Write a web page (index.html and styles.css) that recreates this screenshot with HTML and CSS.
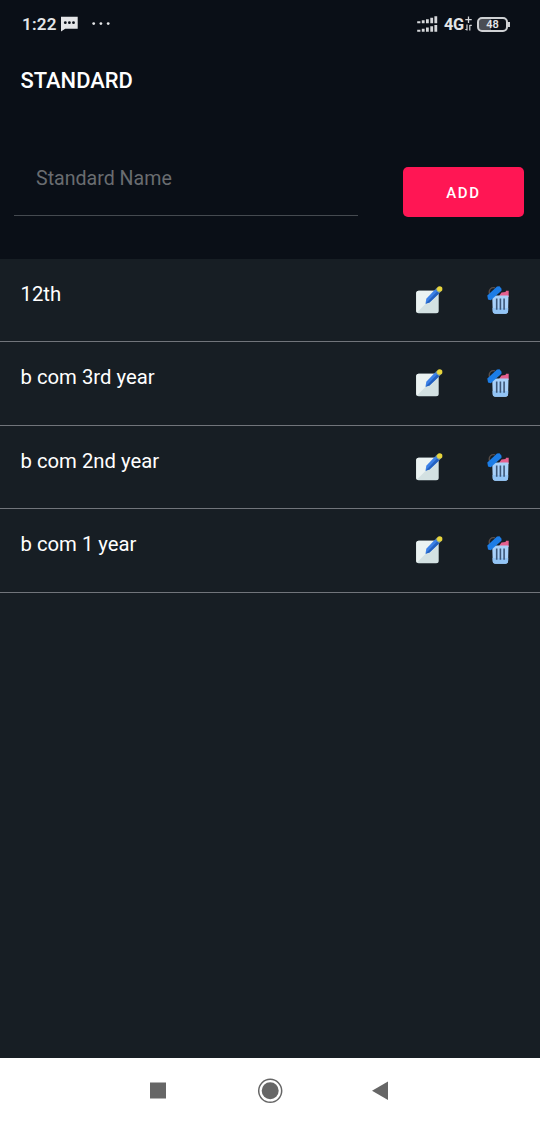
FILE: index.html
```html
<!DOCTYPE html>
<html lang="en">
<head>
    <meta charset="UTF-8">
    <meta name="viewport" content="width=device-width, initial-scale=1.0">
    <title>Standard</title>
    <link rel="stylesheet" href="styles.css">
</head>
<body>
    <!-- Shared row icons -->
    <svg class="icon-defs" aria-hidden="true">
        <symbol id="icon-edit" viewBox="0 0 28 28">
            <rect x="1.200" y="4.700" width="22.500" height="22.500" rx="2.500" fill="#d3e1e2"/>
            <path d="M3.700 4.700H21a2.500 2.500 0 0 1 2 .8L1.900 26.500A2.500 2.500 0 0 1 1.200 24.700V7.200a2.500 2.500 0 0 1 2.500-2.500z" fill="#ebf3f2"/>
            <path d="M20.300 3.300l4 3.900-9.800 9.300-4 1.200.8-4.900z" fill="#3b80e6"/>
            <path d="M22.300 5.300l2 1.900-9.800 9.300-4 1.200z" fill="#2461bf"/>
            <path d="M20.300 3.300l1.900-1.700 3.900 3.700-1.800 1.900z" fill="#7d9c9b"/>
            <circle cx="24.700" cy="2.900" r="2.700" fill="#e8d53c"/>
        </symbol>
        <symbol id="icon-delete" viewBox="0 0 24 30">
            <path d="M2.500 8C1.200 3.500 4.500 .8 8 1.800" fill="none" stroke="#594d47" stroke-width="1.300"/>
            <path d="M12 10l2.500-3.500 4-.5.500-1.300h2.700V11H12z" fill="#e6608f"/>
            <path d="M5.200 9.500h16.300l-.4 15.500a2.800 2.800 0 0 1-2.800 2.700H8.500A2.800 2.800 0 0 1 5.700 25z" fill="#a9d1f9"/>
            <path d="M5.600 22h15.600l-.1 3a2.800 2.800 0 0 1-2.800 2.700H8.500A2.800 2.800 0 0 1 5.700 25z" fill="#92c4f5"/>
            <path d="M9.700 12.500v11.300M13.400 12.500v11.300M17.100 12.500v11.300" stroke="#3d5778" stroke-width="1.600"/>
            <path d="M.3 9.500L10 .5l2.500-.2 2 2.500v2L3.800 14.200 1 13.500z" fill="#1c7de6"/>
        </symbol>
    </svg>

    <div class="screen">
        <div class="status-bar">
            <span class="time">1:22</span>
            <svg class="sms-icon" width="18" height="16" viewBox="0 0 18 16">
                <path d="M0 .8h16.700v11.900H4.200L0 15.500z" fill="#e4e5e7"/>
                <circle cx="4.300" cy="6.700" r="1.400" fill="#0a0f17"/>
                <circle cx="8.400" cy="6.700" r="1.400" fill="#0a0f17"/>
                <circle cx="12.500" cy="6.700" r="1.400" fill="#0a0f17"/>
            </svg>
            <svg class="more-icon" width="18" height="4" viewBox="0 0 18 4" fill="#e4e5e7">
                <circle cx="1.700" cy="1.600" r="1.400"/>
                <circle cx="8.900" cy="1.600" r="1.400"/>
                <circle cx="16.200" cy="1.600" r="1.400"/>
            </svg>
            <div class="status-right">
                <svg width="21" height="17" viewBox="0 0 21 17" fill="#d5d7da">
                    <path d="M.2 5.200h3.200v2H.2zM4.800 4.200h2.800v3H4.800zM9 3.200h2.800v4H9zM13.300 1.800h2.800v5.400h-2.800zM17.400 .3h2.800v6.900h-2.800z"/>
                    <path d="M.2 13.700h3.200v2H.2zM4.800 12.700h2.800v3H4.800zM9 11.400h2.800v4.300H9zM13.300 10.200h2.800v5.500h-2.800zM17.400 9h2.800v6.700h-2.800z"/>
                </svg>
                <span class="network">4G</span>
                <svg class="data-icon" width="7" height="16" viewBox="0 0 7 16" fill="none" stroke="#d5d7da">
                    <path d="M.3 3.700h6.400M3.500 .5v6.400" stroke-width="1.300"/>
                    <path d="M2 8.500v6M4.800 14.500V9M4.800 9.300h2M.3 13.500h1.700" stroke-width="1.200"/>
                </svg>
                <div class="battery"><span>48</span></div>
            </div>
        </div>

        <h1 class="title">STANDARD</h1>

        <div class="add-form">
            <input type="text" class="name-input" placeholder="Standard Name">
            <button class="add-btn">ADD</button>
        </div>

        <div class="standard-list">
            <div class="standard-item">
                <span class="standard-name">12th</span>
                <svg class="edit-icon"><use href="#icon-edit"/></svg>
                <svg class="delete-icon"><use href="#icon-delete"/></svg>
            </div>
            <div class="standard-item">
                <span class="standard-name">b com 3rd year</span>
                <svg class="edit-icon"><use href="#icon-edit"/></svg>
                <svg class="delete-icon"><use href="#icon-delete"/></svg>
            </div>
            <div class="standard-item">
                <span class="standard-name">b com 2nd year</span>
                <svg class="edit-icon"><use href="#icon-edit"/></svg>
                <svg class="delete-icon"><use href="#icon-delete"/></svg>
            </div>
            <div class="standard-item">
                <span class="standard-name">b com 1 year</span>
                <svg class="edit-icon"><use href="#icon-edit"/></svg>
                <svg class="delete-icon"><use href="#icon-delete"/></svg>
            </div>
        </div>

        <div class="nav-bar">
            <svg width="26" height="26" viewBox="0 0 26 26">
                <rect x="4" y="4.500" width="16" height="16" fill="#666"/>
            </svg>
            <svg width="26" height="26" viewBox="0 0 26 26">
                <circle cx="13.200" cy="12.800" r="11.500" fill="none" stroke="#666" stroke-width="1.500"/>
                <circle cx="13.200" cy="12.800" r="8.500" fill="#666"/>
            </svg>
            <svg width="26" height="26" viewBox="0 0 26 26">
                <path d="M4 12.800L20 3.600v18.400z" fill="#666"/>
            </svg>
        </div>
    </div>
</body>
</html>
```

FILE: styles.css
```css
* {
    box-sizing: border-box;
}

body, html {
    margin: 0;
    padding: 0;
    height: 100%;
}

body {
    font-family: Roboto, sans-serif;
    background-color: #0a0f17;
    color: #fff;
}

svg {
    display: block;
    flex-shrink: 0;
}

.icon-defs {
    display: none;
}

.screen {
    display: flex;
    flex-direction: column;
    height: 100%;
    overflow: hidden;
}

.status-bar {
    display: flex;
    align-items: center;
    height: 48px;
    padding: 0 32px 0 22px;
    color: #e4e5e7;
}

.time {
    width: 39px;
    font-size: 17px;
    font-weight: 600;
    letter-spacing: 0.2px;
}

.more-icon {
    margin-left: 13px;
}

.status-right {
    display: flex;
    align-items: center;
    margin-left: auto;
}

.network {
    width: 20px;
    margin-left: 6px;
    font-size: 16.3px;
    font-weight: 700;
    letter-spacing: -0.3px;
}

.data-icon {
    margin-left: 1px;
}

.battery {
    position: relative;
    width: 31px;
    height: 15px;
    margin-left: 5px;
    border: 2px solid #cfd1d4;
    border-radius: 5px;
    background: linear-gradient(to right, #4b4e54 45%, transparent 45%);
    font-size: 11px;
    font-weight: 600;
    line-height: 12px;
    text-align: center;
}

.battery::after {
    content: "";
    position: absolute;
    top: 3px;
    right: -4px;
    width: 2px;
    height: 5px;
    background-color: #cfd1d4;
}

.title {
    margin: 0;
    height: 66px;
    padding-left: 20.5px;
    font-size: 21.9px;
    font-weight: 500;
    line-height: 66px;
}

.add-form {
    display: flex;
    justify-content: space-between;
    height: 144.5px;
    padding: 52px 16.5px 0 14px;
}

.name-input {
    width: 344px;
    height: 50px;
    padding: 0 22px 24px;
    border: none;
    border-bottom: 1px solid #454a50;
    background: none;
    color: #fff;
    font-family: inherit;
    font-size: 19.6px;
    outline: none;
}

.name-input::placeholder {
    color: #696c70;
}

.add-btn {
    width: 121px;
    height: 50px;
    margin-top: 1px;
    padding: 1px 0 0 1px;
    border: none;
    border-radius: 5px;
    background-color: #ff1654;
    color: #fff;
    font-family: inherit;
    font-size: 15px;
    font-weight: 500;
    letter-spacing: 1.6px;
}

.standard-list {
    flex: 1;
    background-color: #171e24;
}

.standard-item {
    display: flex;
    align-items: flex-start;
    height: 83.5px;
    padding: 23px 29px 0 20.5px;
    border-bottom: 1px solid #71757b;
}

.standard-name {
    flex: 1;
    font-size: 20.3px;
    line-height: 24px;
}

.edit-icon {
    width: 28px;
    height: 28px;
    margin-top: 4px;
}

.delete-icon {
    width: 24px;
    height: 30px;
    margin-top: 4px;
    margin-left: 44px;
}

.nav-bar {
    display: flex;
    align-items: center;
    justify-content: center;
    gap: 85px;
    height: 65px;
    background-color: #fff;
}
```
